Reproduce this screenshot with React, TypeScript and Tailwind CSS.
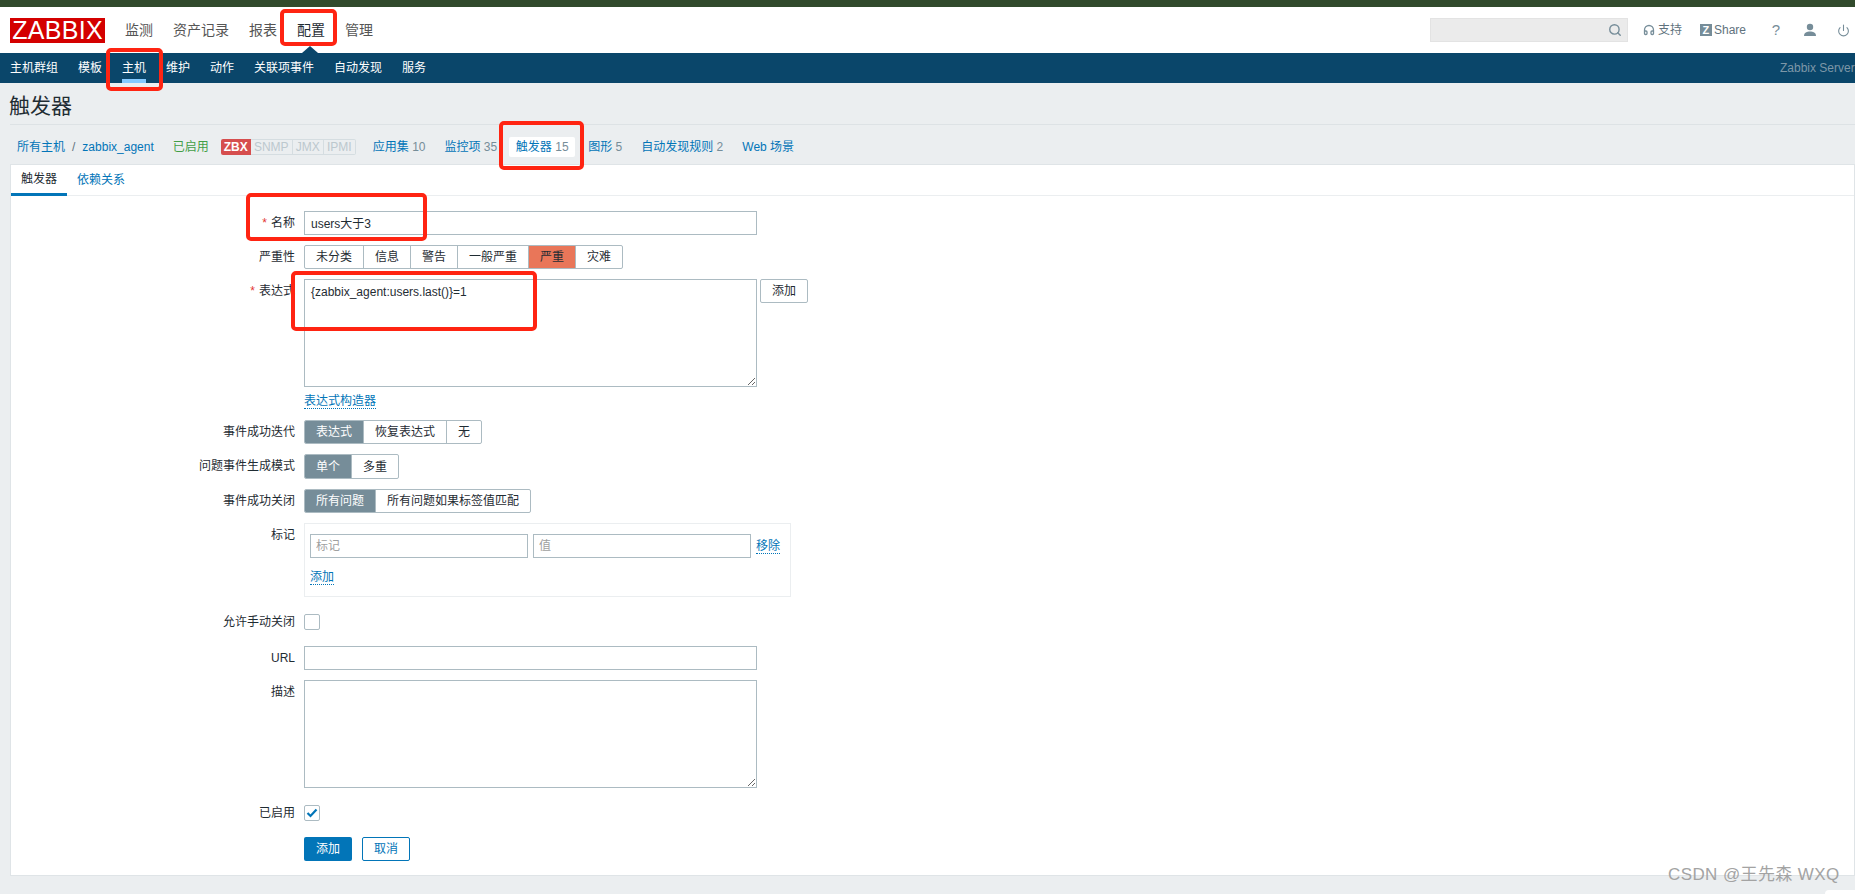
import React from "react";
import { Search, Headphones, Power } from "lucide-react";

function Toggle({ items, active, activeClass, h = "h-[24px]" }: { items: string[]; active: number; activeClass: string; h?: string }) {
  return (
    <div className={`flex ${h} w-fit border border-[#acbbc2] rounded-[2px] overflow-hidden bg-white`}>
      {items.map((t, i) => (
        <div
          key={t}
          className={`flex items-center px-[11px] ${i > 0 ? "border-l border-[#acbbc2]" : ""} ${i === active ? activeClass : "text-[#1f2c33]"}`}
        >
          {t}
        </div>
      ))}
    </div>
  );
}

function Row({ label, req, className = "", children }: { label: string; req?: boolean; className?: string; children: React.ReactNode }) {
  return (
    <div className={`flex gap-[9px] ${className}`}>
      <div className="w-[284px] shrink-0 text-right leading-[24px]">
        {req && <span className="text-[#e33734] mr-[4px]">*</span>}
        {label}
      </div>
      <div className="flex-1 min-w-0">{children}</div>
    </div>
  );
}

function Check({ checked }: { checked?: boolean }) {
  return (
    <div className="w-[16px] h-[16px] border border-[#acbbc2] rounded-[2px] flex items-center justify-center bg-white">
      {checked && (
        <svg width="12" height="10" viewBox="0 0 12 10" fill="none">
          <path d="M1.5 5 L4.5 8 L10.5 1.5" stroke="#0275b8" strokeWidth="2.2" />
        </svg>
      )}
    </div>
  );
}

function Count({ label, n, className = "" }: { label: string; n?: string; className?: string }) {
  return (
    <span className={className}>
      <span className="text-[#0275b8]">{label}</span>
      {n && <span className="text-[#768d99]"> {n}</span>}
    </span>
  );
}

function Mark({ className }: { className: string }) {
  return <div className={`absolute border-[4px] border-[#ff2412] rounded-[5px] pointer-events-none ${className}`} />;
}

const field = "block border border-[#acbbc2] bg-white px-[5px] text-xs text-[#1f2c33] outline-none rounded-none";
const link = "text-[#0275b8] border-b border-dotted border-[#0275b8] leading-[14px] w-fit";

export default function App() {
  return (
    <div className="relative w-[1855px] h-[894px] overflow-hidden bg-[#ebeef0] text-xs text-[#1f2c33] font-['Liberation_Sans','Noto_Sans_CJK_SC',sans-serif]">
      <div className="h-[7px] bg-[#314a2c]" />

      <header className="relative h-[46px] bg-white flex items-center">
        <div className="ml-[10px] w-[95px] h-[25px] bg-[#d40000] text-white text-[25px] leading-[25px] text-center tracking-[0.3px]">
          ZABBIX
        </div>
        <nav className="ml-[20px] flex gap-[20px] text-sm text-[#555]">
          <span>监测</span>
          <span>资产记录</span>
          <span>报表</span>
          <span className="text-[#1f2c33]">配置</span>
          <span>管理</span>
        </nav>
        <div className="ml-auto flex items-center text-[#5f727d]">
          <div className="w-[198px] h-[24px] bg-[#ebebeb] border border-[#e3e3e3] flex items-center justify-end pr-[5px]">
            <Search size={14} strokeWidth={2.4} className="text-[#768d99]" />
          </div>
          <Headphones size={12} strokeWidth={2.6} className="ml-[15px] text-[#768d99]" />
          <span className="ml-[3px]">支持</span>
          <span className="ml-[18px] w-[12px] h-[12px] bg-[#768d99] text-white text-[11px] leading-[12px] font-bold text-center">Z</span>
          <span className="ml-[2px]">Share</span>
          <span className="ml-[25px] w-[10px] text-[15px] text-[#768d99] text-center">?</span>
          <svg className="ml-[22px]" width="14" height="14" viewBox="0 0 14 14" fill="#768d99">
            <circle cx="7" cy="4" r="3.2" />
            <path d="M1 13 C1 9.5 4 8.5 7 8.5 C10 8.5 13 9.5 13 13 Z" />
          </svg>
          <Power size={13} strokeWidth={2} className="ml-[20px] mr-[5px] text-[#768d99]" />
        </div>
        <svg className="absolute left-[302px] bottom-0" width="16" height="7" viewBox="0 0 16 7" fill="#0a466a">
          <path d="M0 7 L8 0 L16 7 Z" />
        </svg>
      </header>

      <nav className="h-[30px] bg-[#0a466a] flex items-stretch pl-[10px] gap-[20px] text-white">
        {["主机群组", "模板", "主机", "维护", "动作", "关联项事件", "自动发现", "服务"].map((t) => (
          <div key={t} className={`flex items-center ${t === "主机" ? "border-b-[4px] border-[#84c9ff] pt-[4px]" : ""}`}>
            {t}
          </div>
        ))}
        <div className="ml-auto flex items-center text-[#7d97a8] w-[75px] whitespace-nowrap overflow-hidden">Zabbix Server</div>
      </nav>

      <div className="h-[42px] ml-[10px] border-b border-[#dde2e5] flex items-center pt-[3px] text-[21px] leading-none text-[#1f2c33]">
        <span className="-ml-[1px]">触发器</span>
      </div>

      <div className="h-[39px] flex items-center pl-[17px] pt-[4px] whitespace-nowrap">
        <span className="text-[#0275b8]">所有主机</span>
        <span className="ml-[7px] text-[#5f727d]">/</span>
        <span className="ml-[7px] text-[#0275b8]">zabbix_agent</span>
        <span className="ml-[19px] text-[#429e47]">已启用</span>
        <div className="ml-[12px] flex h-[16px] text-[12px] leading-[16px] font-normal">
          <span className="w-[30px] text-center bg-[#d64e4e] text-white font-bold rounded-l-[2px]">ZBX</span>
          <span className="w-[42px] text-center border-y border-r border-[#d5dde1] text-[#bcc8ce] leading-[14px]">SNMP</span>
          <span className="w-[31px] text-center border-y border-r border-[#d5dde1] text-[#bcc8ce] leading-[14px]">JMX</span>
          <span className="w-[32px] text-center border-y border-r border-[#d5dde1] text-[#bcc8ce] leading-[14px] rounded-r-[2px]">IPMI</span>
        </div>
        <Count label="应用集" n="10" className="ml-[17px]" />
        <Count label="监控项" n="35" className="ml-[19px]" />
        <div className="ml-[12px] h-[20px] w-[66px] bg-white flex items-center justify-center rounded-[2px]">
          <Count label="触发器" n="15" />
        </div>
        <Count label="图形" n="5" className="ml-[13px]" />
        <Count label="自动发现规则" n="2" className="ml-[19px]" />
        <Count label="Web 场景" className="ml-[19px]" />
      </div>

      <main className="ml-[10px] h-[712px] bg-white border border-[#dfe4e7]">
        <div className="h-[31px] flex border-b border-[#ebeef0]">
          <div className="w-[56px] h-[31px] flex items-center justify-center border-b-[3px] border-[#0275b8]">触发器</div>
          <div className="ml-[10px] flex items-center text-[#0275b8]">依赖关系</div>
        </div>

        <form className="pt-[15px]">
          <Row label="名称" req>
            <input readOnly value="users大于3" className={`${field} w-[453px] h-[24px] pb-[2px] pl-[6px]`} />
          </Row>
          <Row label="严重性" className="mt-[10px]">
            <Toggle
              items={["未分类", "信息", "警告", "一般严重", "严重", "灾难"]}
              active={4}
              activeClass="bg-[#e97659] text-[#1f2c33]"
            />
          </Row>
          <Row label="表达式" req className="mt-[10px]">
            <div className="flex items-start gap-[3px]">
              <textarea
                readOnly
                value="{zabbix_agent:users.last()}=1"
                className={`${field} w-[453px] h-[108px] py-[4px] pl-[6px] resize-y`}
              />
              <div className="h-[24px] w-[48px] border border-[#acbbc2] rounded-[2px] flex items-center justify-center">添加</div>
            </div>
            <div className={`${link} mt-[7px]`}>表达式构造器</div>
          </Row>
          <Row label="事件成功迭代" className="mt-[11px]">
            <Toggle items={["表达式", "恢复表达式", "无"]} active={0} activeClass="bg-[#768d99] text-white" />
          </Row>
          <Row label="问题事件生成模式" className="mt-[10px]">
            <Toggle items={["单个", "多重"]} active={0} activeClass="bg-[#768d99] text-white" h="h-[25px]" />
          </Row>
          <Row label="事件成功关闭" className="mt-[10px]">
            <Toggle items={["所有问题", "所有问题如果标签值匹配"]} active={0} activeClass="bg-[#768d99] text-white" />
          </Row>
          <Row label="标记" className="mt-[10px]">
            <div className="w-[487px] h-[74px] border border-[#ebeef0] px-[5px] pt-[10px]">
              <div className="flex items-center gap-[5px]">
                <input readOnly placeholder="标记" className={`${field} w-[218px] h-[24px] placeholder:text-[#a0a0a0]`} />
                <input readOnly placeholder="值" className={`${field} w-[218px] h-[24px] placeholder:text-[#a0a0a0]`} />
                <span className={link}>移除</span>
              </div>
              <div className={`${link} mt-[12px]`}>添加</div>
            </div>
          </Row>
          <Row label="允许手动关闭" className="mt-[17px] h-[16px] items-center">
            <Check />
          </Row>
          <Row label="URL" className="mt-[16px]">
            <input readOnly className={`${field} w-[453px] h-[24px]`} />
          </Row>
          <Row label="描述" className="mt-[10px]">
            <textarea readOnly className={`${field} w-[453px] h-[108px] resize-y`} />
          </Row>
          <Row label="已启用" className="mt-[17px] h-[16px] items-center">
            <Check checked />
          </Row>
          <Row label="" className="mt-[16px]">
            <div className="flex gap-[10px]">
              <div className="w-[48px] h-[24px] bg-[#0275b8] text-white rounded-[2px] flex items-center justify-center">添加</div>
              <div className="w-[48px] h-[24px] border border-[#0275b8] text-[#0275b8] rounded-[2px] flex items-center justify-center">取消</div>
            </div>
          </Row>
        </form>
      </main>

      <Mark className="left-[280px] top-[9px] w-[57px] h-[37px]" />
      <Mark className="left-[106px] top-[48px] w-[57px] h-[43px]" />
      <Mark className="left-[499px] top-[121px] w-[85px] h-[49px]" />
      <Mark className="left-[246px] top-[193px] w-[181px] h-[48px]" />
      <Mark className="left-[291px] top-[271px] w-[246px] h-[60px]" />

      <div className="absolute left-[1668px] top-[865px] text-[17px] leading-[20px] text-[#a3a3a3] tracking-[0.4px] whitespace-nowrap">
        CSDN @王先森 WXQ
      </div>
      <div className="absolute right-0 bottom-0 w-[30px] h-[4px] bg-white rounded-tl-[4px]" />
    </div>
  );
}
